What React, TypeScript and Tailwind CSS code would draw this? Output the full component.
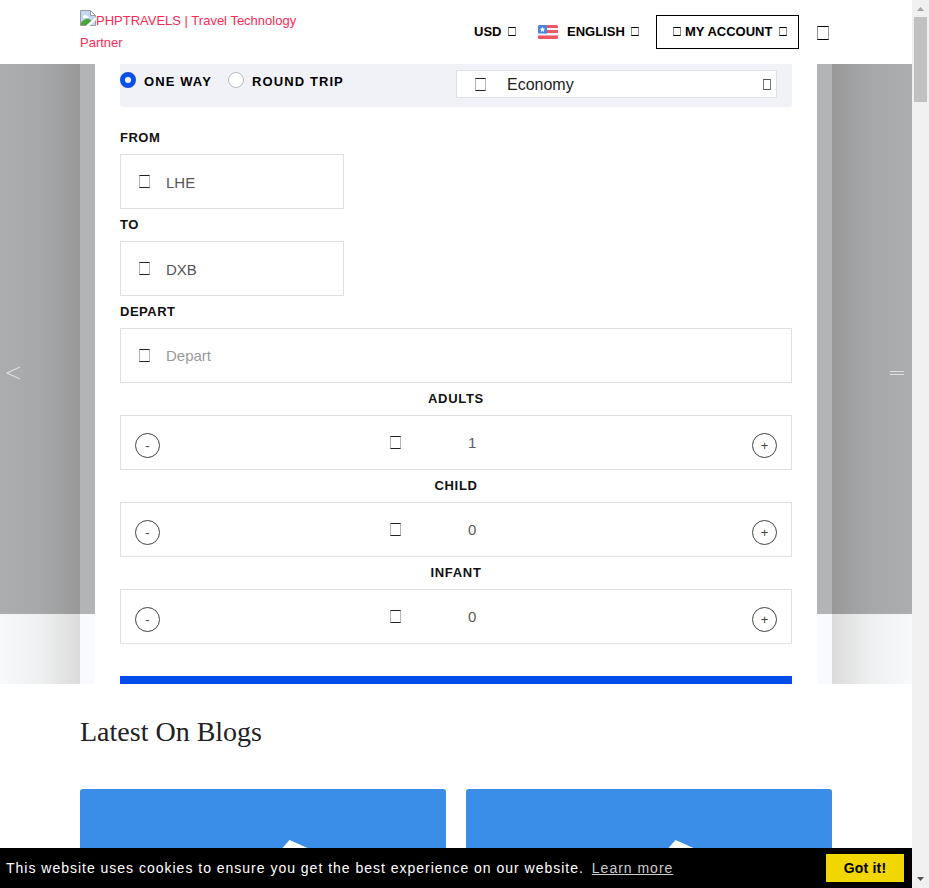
import React from "react";

type GlyphProps = { className: string };

function Glyph({ className }: GlyphProps) {
  return <span className={`block shrink-0 border ${className}`} />;
}

const fieldIcon = "h-[13px] w-[11px] border-x-[#b5b5b5] border-y-[#222]";
const caret = "h-[9px] w-[8px] border-x-[#8a8a8a] border-y-black";

function BrokenImage() {
  return (
    <svg width="16" height="16" viewBox="0 0 16 16" className="inline-block align-top">
      <path d="M.5.5h10l5 5v10H.5z" fill="#c3d6f3" stroke="#9a9d9f" />
      <path d="M10.5.5v5h5z" fill="#fff" stroke="#9a9d9f" />
      <path d="M3 7c0-2 3-3 4-1 2 0 2 2 1 2H3z" fill="#fff" />
      <path d="M1 15v-2c2-3 5-5 8-4l3 2-4 4z" fill="#4ca33a" />
      <path d="M7 16.500 16.500 8" stroke="#fff" strokeWidth="2.5" />
    </svg>
  );
}

function Flag() {
  return (
    <svg width="20" height="14" viewBox="0 0 20 14">
      <defs>
        <clipPath id="flagShape">
          <rect width="20" height="14" rx="1.5" />
        </clipPath>
      </defs>
      <g clipPath="url(#flagShape)">
        <rect width="20" height="14" fill="#f2f3f5" />
        <path d="M0 0h20v3H0zM0 5h20v3H0zM0 10.500h20v3.500H0z" fill="#f05565" />
        <rect width="9" height="8.500" fill="#4688dc" />
        <path d="m4.5 1.8.8 1.6 1.9.3-1.4 1.3.4 1.9-1.7-.9-1.7.9.4-1.9-1.400-1.300 1.900-.3z" fill="#fff" />
      </g>
    </svg>
  );
}

function Header() {
  return (
    <header className="flex h-16 shrink-0 bg-white pl-20 text-[13px] font-bold text-black">
      <div className="w-[394px] pt-2.5 font-normal leading-[22px] text-[#fa2b56]">
        <div className="flex whitespace-nowrap">
          <BrokenImage />
          PHPTRAVELS | Travel Technology
        </div>
        <div>Partner</div>
      </div>
      <div className="flex h-[63px] items-center">
        <span className="w-[34px]">USD</span>
        <Glyph className={caret} />
        <span className="ml-[22px] w-[29px]">
          <Flag />
        </span>
        <span className="w-[64px]">ENGLISH</span>
        <Glyph className={caret} />
        <div className="ml-[17px] flex h-[34px] w-[143px] items-center border border-black pl-4">
          <Glyph className={caret} />
          <span className="ml-1 w-[94px] whitespace-nowrap">MY ACCOUNT</span>
          <Glyph className={caret} />
        </div>
        <Glyph className="ml-[18px] mt-[3px] h-[14px] w-[12px] border-x-[#999] border-y-black" />
      </div>
    </header>
  );
}

function SelectBar() {
  return (
    <div className="flex h-[43px] rounded-b-[3px] bg-[#f1f2f8] pr-[15px] text-[13px] font-bold tracking-[1.1px] text-black">
      <span className="mt-2 size-4 rounded-full border-[5px] border-[#0650e9] bg-white" />
      <span className="ml-2 mt-2 w-[84px] whitespace-nowrap leading-5">ONE WAY</span>
      <span className="mt-2 size-4 rounded-full border border-[#b8bdc5] bg-white" />
      <span className="ml-2 mt-2 whitespace-nowrap leading-5">ROUND TRIP</span>
      <div className="ml-auto mt-1.5 flex h-7 w-[321px] items-center border border-[#dfe0e3] bg-white pl-[18px] pr-[5px] text-base font-normal tracking-normal text-[#222]">
        <Glyph className={fieldIcon} />
        <span className="ml-[21px] grow pt-0.5">Economy</span>
        <Glyph className="h-[11px] w-[8px] border-x-[#777] border-y-[#555]" />
      </div>
    </div>
  );
}

type FieldProps = { label: string; text: string; wide?: boolean; muted?: boolean };

function Field({ label, text, wide, muted }: FieldProps) {
  return (
    <div className="h-[87px]">
      <div className="h-8 pt-1.5 text-[13px] font-bold leading-5 tracking-[.5px] text-[#111]">{label}</div>
      <div
        className={`flex h-[55px] items-center border border-[#dfe0e2] pl-[18px] text-[15px] ${wide ? "w-full" : "w-56"} ${muted ? "text-[#999]" : "text-[#555]"}`}
      >
        <Glyph className={fieldIcon} />
        <span className={`ml-4 ${muted ? "pt-px" : "pt-[3px]"}`}>{text}</span>
      </div>
    </div>
  );
}

function RoundButton({ sign }: { sign: string }) {
  return (
    <span className="mt-[5px] flex size-[25px] items-center justify-center rounded-full border border-[#444] pt-px text-[13px] text-[#444]">
      {sign}
    </span>
  );
}

function Counter({ label, value }: { label: string; value: number }) {
  return (
    <div className="h-[87px]">
      <div className="h-8 pt-1.5 text-center text-[13px] font-bold leading-5 tracking-[.7px] text-[#111]">{label}</div>
      <div className="flex h-[55px] items-center border border-[#dfe0e2] px-[14px] text-[15px] text-[#555b61]">
        <RoundButton sign="-" />
        <Glyph className={`ml-[230px] ${fieldIcon}`} />
        <span className="ml-[67px] grow pt-0.5">{value}</span>
        <RoundButton sign="+" />
      </div>
    </div>
  );
}

function Backdrop({ side }: { side: "left" | "right" }) {
  const left = side === "left";
  return (
    <div className="flex w-20 shrink-0 flex-col">
      <div
        className={`flex h-[550px] items-center from-[#acadaf] via-[#a7a8a9] to-[#99999a] ${left ? "bg-linear-to-r pl-1.5" : "justify-end bg-linear-to-l pr-2"}`}
      >
        {left ? (
          <svg width="15" height="14" viewBox="0 0 15 14" className="mt-[67px]" fill="none" stroke="#dedede" strokeWidth="1.2">
            <path d="M14 1 1 7l13 6" />
          </svg>
        ) : (
          <span className="mt-[68px] h-1 w-[14px] border-y border-[#dedede]" />
        )}
      </div>
      <div
        className={`h-[70px] from-[#f8f9fb] via-[#eff0f1] to-[#dbdcda] ${left ? "bg-linear-to-r" : "bg-linear-to-l"}`}
      />
    </div>
  );
}

function Edge() {
  return (
    <div className="flex w-[15px] shrink-0 flex-col">
      <div className="h-[550px] bg-[#b3b4b6]" />
      <div className="h-[70px] bg-[#f9fafd]" />
    </div>
  );
}

function Hero() {
  return (
    <section className="flex h-[620px] shrink-0 overflow-hidden">
      <Backdrop side="left" />
      <Edge />
      <div className="w-[722px] shrink-0 bg-white px-[25px]">
        <SelectBar />
        <div className="pt-[15px]">
          <Field label="FROM" text="LHE" />
          <Field label="TO" text="DXB" />
          <Field label="DEPART" text="Depart" wide muted />
          <Counter label="ADULTS" value={1} />
          <Counter label="CHILD" value={0} />
          <Counter label="INFANT" value={0} />
        </div>
        <div className="mt-8 h-2 bg-[#054ce8]" />
      </div>
      <Edge />
      <Backdrop side="right" />
    </section>
  );
}

function BlogCard() {
  return (
    <div className="h-[59px] w-[366px] rounded-t-[3px] bg-[#3a8ee8]">
      <svg width="366" height="59" viewBox="0 0 366 59">
        <path d="m202.500 59 7-8 18 8z" fill="#fff" />
      </svg>
    </div>
  );
}

function Scrollbar() {
  return (
    <div className="flex h-full w-[17px] flex-col items-center bg-[#f0f0f0]">
      <svg width="17" height="17" viewBox="0 0 17 17" className="shrink-0">
        <path d="m5 11 3.500-4 3.500 4z" fill="#a3a3a3" />
      </svg>
      <div className="h-[85px] w-[13px] shrink-0 bg-[#c1c1c1]" />
      <svg width="17" height="17" viewBox="0 0 17 17" className="mt-auto shrink-0">
        <path d="M5 6h7l-3.500 4z" fill="#505050" />
      </svg>
    </div>
  );
}

export default function App() {
  return (
    <div className="flex h-[888px] w-[929px] overflow-hidden bg-white font-['Liberation_Sans',sans-serif]">
      <div className="flex w-[912px] flex-col">
        <Header />
        <Hero />
        <section className="h-[164px] px-20">
          <h2 className="h-[105px] pt-7 font-['Liberation_Serif',serif] text-[28px] leading-10 text-[#212121]">
            Latest On Blogs
          </h2>
          <div className="flex gap-5">
            <BlogCard />
            <BlogCard />
          </div>
        </section>
        <footer className="flex h-10 items-center bg-black pl-1.5 pr-2 text-sm tracking-[.99px] text-white">
          <span className="whitespace-nowrap">
            This website uses cookies to ensure you get the best experience on our website.
          </span>
          <span className="ml-2 whitespace-nowrap text-[#ccc] underline">Learn more</span>
          <button className="ml-auto h-7 w-[78px] bg-[#f1d600] text-sm font-bold tracking-[.2px] text-black">Got it!</button>
        </footer>
      </div>
      <Scrollbar />
    </div>
  );
}
